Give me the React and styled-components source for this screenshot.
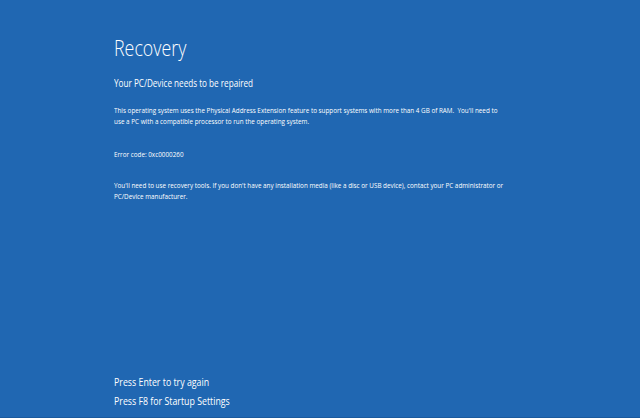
import React from "react";
import styled, { createGlobalStyle } from "styled-components";

const GlobalStyle = createGlobalStyle`
  html, body {
    margin: 0;
    padding: 0;
    background: #2067b2;
  }
`;

const Screen = styled.div`
  height: 418px;
  box-sizing: border-box;
  display: flex;
  flex-direction: column;
  padding: 33px 0 0 114px;
  background: #2067b2;
  border-bottom: 1px solid #1a5a9e;
  color: #ffffff;
  font-family: "Open Sans", "Liberation Sans", sans-serif;
  overflow: hidden;
`;

const Line = styled.div`
  font-size: ${(p) => p.size}px;
  font-weight: ${(p) => p.weight || 400};
  line-height: ${(p) => p.lh}px;
  margin-top: ${(p) => p.mt || 0}px;
  white-space: nowrap;
  transform: scaleX(${(p) => p.sx});
  transform-origin: 0 0;
`;

const Footer = styled.div`
  margin-top: auto;
  padding-bottom: 7px;
`;

export default function App() {
  return (
    <>
      <GlobalStyle />
      <Screen>
        <Line size={22} weight={300} lh={28} sx={0.81}>
          Recovery
        </Line>
        <Line size={11} lh={16} mt={14} sx={0.74}>
          Your PC/Device needs to be repaired
        </Line>
        <Line size={8} lh={11} mt={13} sx={0.79}>
          This operating system uses the Physical Address Extension feature to
          support systems with more than 4 GB of RAM.&nbsp; You'll need to
          <br />
          use a PC with a compatible processor to run the operating system.
        </Line>
        <Line size={8} lh={11} mt={22} sx={0.79}>
          Error code: 0xc0000260
        </Line>
        <Line size={8} lh={11} mt={20} sx={0.79}>
          You'll need to use recovery tools. If you don't have any installation
          media (like a disc or USB device), contact your PC administrator or
          <br />
          PC/Device manufacturer.
        </Line>
        <Footer>
          <Line size={11} lh={19} sx={0.8}>
            Press Enter to try again
          </Line>
          <Line size={11} lh={19} sx={0.8}>
            Press F8 for Startup Settings
          </Line>
        </Footer>
      </Screen>
    </>
  );
}
